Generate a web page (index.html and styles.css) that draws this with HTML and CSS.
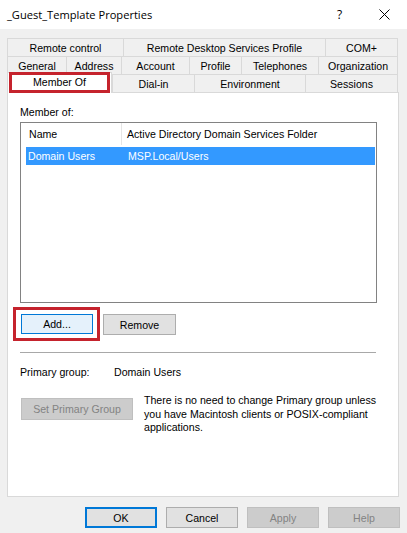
FILE: index.html
```html
<!DOCTYPE html>
<html>
<head>
<meta charset="utf-8">
<link rel="stylesheet" href="styles.css">
</head>
<body>
<div class="window">
  <div class="titlebar">
    <span class="title">_Guest_Template Properties</span>
    <span class="help">?</span>
    <span class="close">
      <svg width="11" height="11" viewBox="0 0 11 11"><path d="M0.5 0.5 L10.5 10.5 M10.5 0.5 L0.5 10.5" stroke="#000" stroke-width="1" fill="none"/></svg>
    </span>
  </div>
  <div class="tabs">
    <div class="tabrow row1">
      <div class="tab">Remote control</div>
      <div class="tab">Remote Desktop Services Profile</div>
      <div class="tab last">COM+</div>
    </div>
    <div class="tabrow row2">
      <div class="tab">General</div>
      <div class="tab">Address</div>
      <div class="tab">Account</div>
      <div class="tab">Profile</div>
      <div class="tab">Telephones</div>
      <div class="tab last">Organization</div>
    </div>
    <div class="tabrow row3">
      <div class="tab active">Member Of<span class="mark mark-tab"></span></div>
      <div class="tab">Dial-in</div>
      <div class="tab">Environment</div>
      <div class="tab last">Sessions</div>
    </div>
  </div>
  <div class="panel">
    <div class="label">Member of:</div>
    <div class="listview">
      <div class="lv-header">
        <div class="lv-col1">Name</div>
        <div class="lv-col2">Active Directory Domain Services Folder</div>
      </div>
      <div class="lv-row selected">
        <div class="lv-cell1">Domain Users</div>
        <div class="lv-cell2">MSP.Local/Users</div>
      </div>
    </div>
    <div class="actions">
      <button class="btn btn-focus btn-add">Add...<span class="mark mark-add"></span></button>
      <button class="btn btn-remove">Remove</button>
    </div>
    <div class="separator"></div>
    <div class="primary">
      <span class="primary-label">Primary group:</span>
      <span>Domain Users</span>
    </div>
    <div class="setrow">
      <button class="btn btn-disabled btn-set">Set Primary Group</button>
      <div class="note">There is no need to change Primary group unless you have Macintosh clients or POSIX-compliant applications.</div>
    </div>
  </div>
  <div class="footer">
    <button class="btn btn-footer btn-default">OK</button>
    <button class="btn btn-footer">Cancel</button>
    <button class="btn btn-footer btn-disabled">Apply</button>
    <button class="btn btn-footer btn-disabled">Help</button>
  </div>
</div>
</body>
</html>
```
FILE: styles.css
```css
html, body {
  margin: 0;
  padding: 0;
}
body {
  font-family: "Liberation Sans", Arial, sans-serif;
  font-size: 10.6px;
  color: #000;
  background: #f0f0f0;
}
.window {
  width: 407px;
  height: 533px;
  background: #f0f0f0;
  display: flex;
  flex-direction: column;
  overflow: hidden;
}
.titlebar {
  height: 29px;
  background: #fff;
  display: flex;
  align-items: center;
  padding-left: 7px;
  flex: none;
}
.title {
  font-family: "Open Sans", "Noto Sans", sans-serif;
  font-size: 11.1px;
  flex: 1;
}
.help {
  font-family: "Open Sans", "Noto Sans", sans-serif;
  font-size: 12px;
  width: 10px;
  margin-right: 32px;
}
.close {
  width: 11px;
  height: 11px;
  margin-right: 17px;
  display: flex;
}
.tabs {
  margin: 9px 0 0 7px;
  width: 391px;
  flex: none;
}
.tabrow {
  display: grid;
  height: 18px;
}
.row1 { grid-template-columns: 116px 202px 73px; }
.row2 { grid-template-columns: 59px 55px 68px 52px 77px 80px; }
.row3 { grid-template-columns: 105px 82px 111px 93px; }
.tab {
  box-sizing: border-box;
  border-top: 1px solid #d9d9d9;
  border-left: 1px solid #d9d9d9;
  display: flex;
  align-items: center;
  justify-content: center;
  white-space: nowrap;
  background: #f0f0f0;
}
.tab.last {
  border-right: 1px solid #d9d9d9;
}
.tab.active {
  position: relative;
  z-index: 2;
  background: #fff;
  margin-top: -2px;
  height: 21px;
  border-right: 1px solid #d9d9d9;
  padding-bottom: 2px;
}
.mark {
  position: absolute;
  border: 3px solid #c5232d;
  pointer-events: none;
}
.mark-tab {
  left: 1px;
  right: 1px;
  top: -1px;
  bottom: 0;
}
.panel {
  margin-left: 7px;
  width: 392px;
  height: 405px;
  box-sizing: border-box;
  border: 1px solid #d9d9d9;
  background: #fff;
  padding: 12px 0 0 12px;
  flex: none;
}
.label {
  line-height: 14px;
  height: 14px;
  margin-bottom: 3px;
}
.listview {
  width: 357px;
  height: 181px;
  box-sizing: border-box;
  border: 1px solid #828282;
  background: #fff;
}
.lv-header {
  display: grid;
  grid-template-columns: 101px 1fr;
  height: 22px;
}
.lv-col1 {
  border-right: 1px solid #e5e5e5;
  padding-left: 8px;
  display: flex;
  align-items: center;
}
.lv-col2 {
  padding-left: 5px;
  display: flex;
  align-items: center;
}
.lv-row {
  display: grid;
  grid-template-columns: 102px 1fr;
  height: 18px;
  margin: 2px 0 0 5px;
  width: 349px;
  align-items: center;
}
.lv-row.selected {
  background: #3399ff;
  color: #fff;
}
.lv-cell1 {
  padding-left: 2px;
}
.actions {
  display: flex;
  gap: 10px;
  margin: 11px 0 0 1px;
}
.btn {
  font-family: "Liberation Sans", Arial, sans-serif;
  font-size: 10.6px;
  color: #000;
  background: #e1e1e1;
  border: 1px solid #adadad;
  box-sizing: border-box;
  width: 73px;
  height: 21px;
  padding: 0;
  margin: 0;
  position: relative;
}
.btn-footer {
  width: 72px;
}
.btn-focus {
  background: #e5f1fb;
  border-color: #0078d7;
}
.btn-add {
  width: 72px;
  height: 20px;
}
.mark-add {
  left: -9px;
  right: -8px;
  top: -8px;
  bottom: -8px;
}
.btn-disabled {
  background: #cccccc;
  border-color: #bfbfbf;
  color: #838383;
}
.btn-default {
  border: 2px solid #0078d7;
}
.separator {
  width: 356px;
  height: 1px;
  background: #a8a8a8;
  margin-top: 17px;
}
.primary {
  margin-top: 12px;
  line-height: 14px;
  display: flex;
}
.primary-label {
  width: 94px;
}
.setrow {
  display: flex;
  align-items: flex-start;
  margin-top: 15px;
  margin-left: 1px;
}
.btn-set {
  width: 112px;
  height: 22px;
  margin-top: 4px;
  flex: none;
}
.note {
  margin-left: 11px;
  line-height: 13.5px;
  width: 236px;
}
.footer {
  display: flex;
  justify-content: flex-end;
  gap: 9px;
  padding: 10px 7px 0 0;
}
```
